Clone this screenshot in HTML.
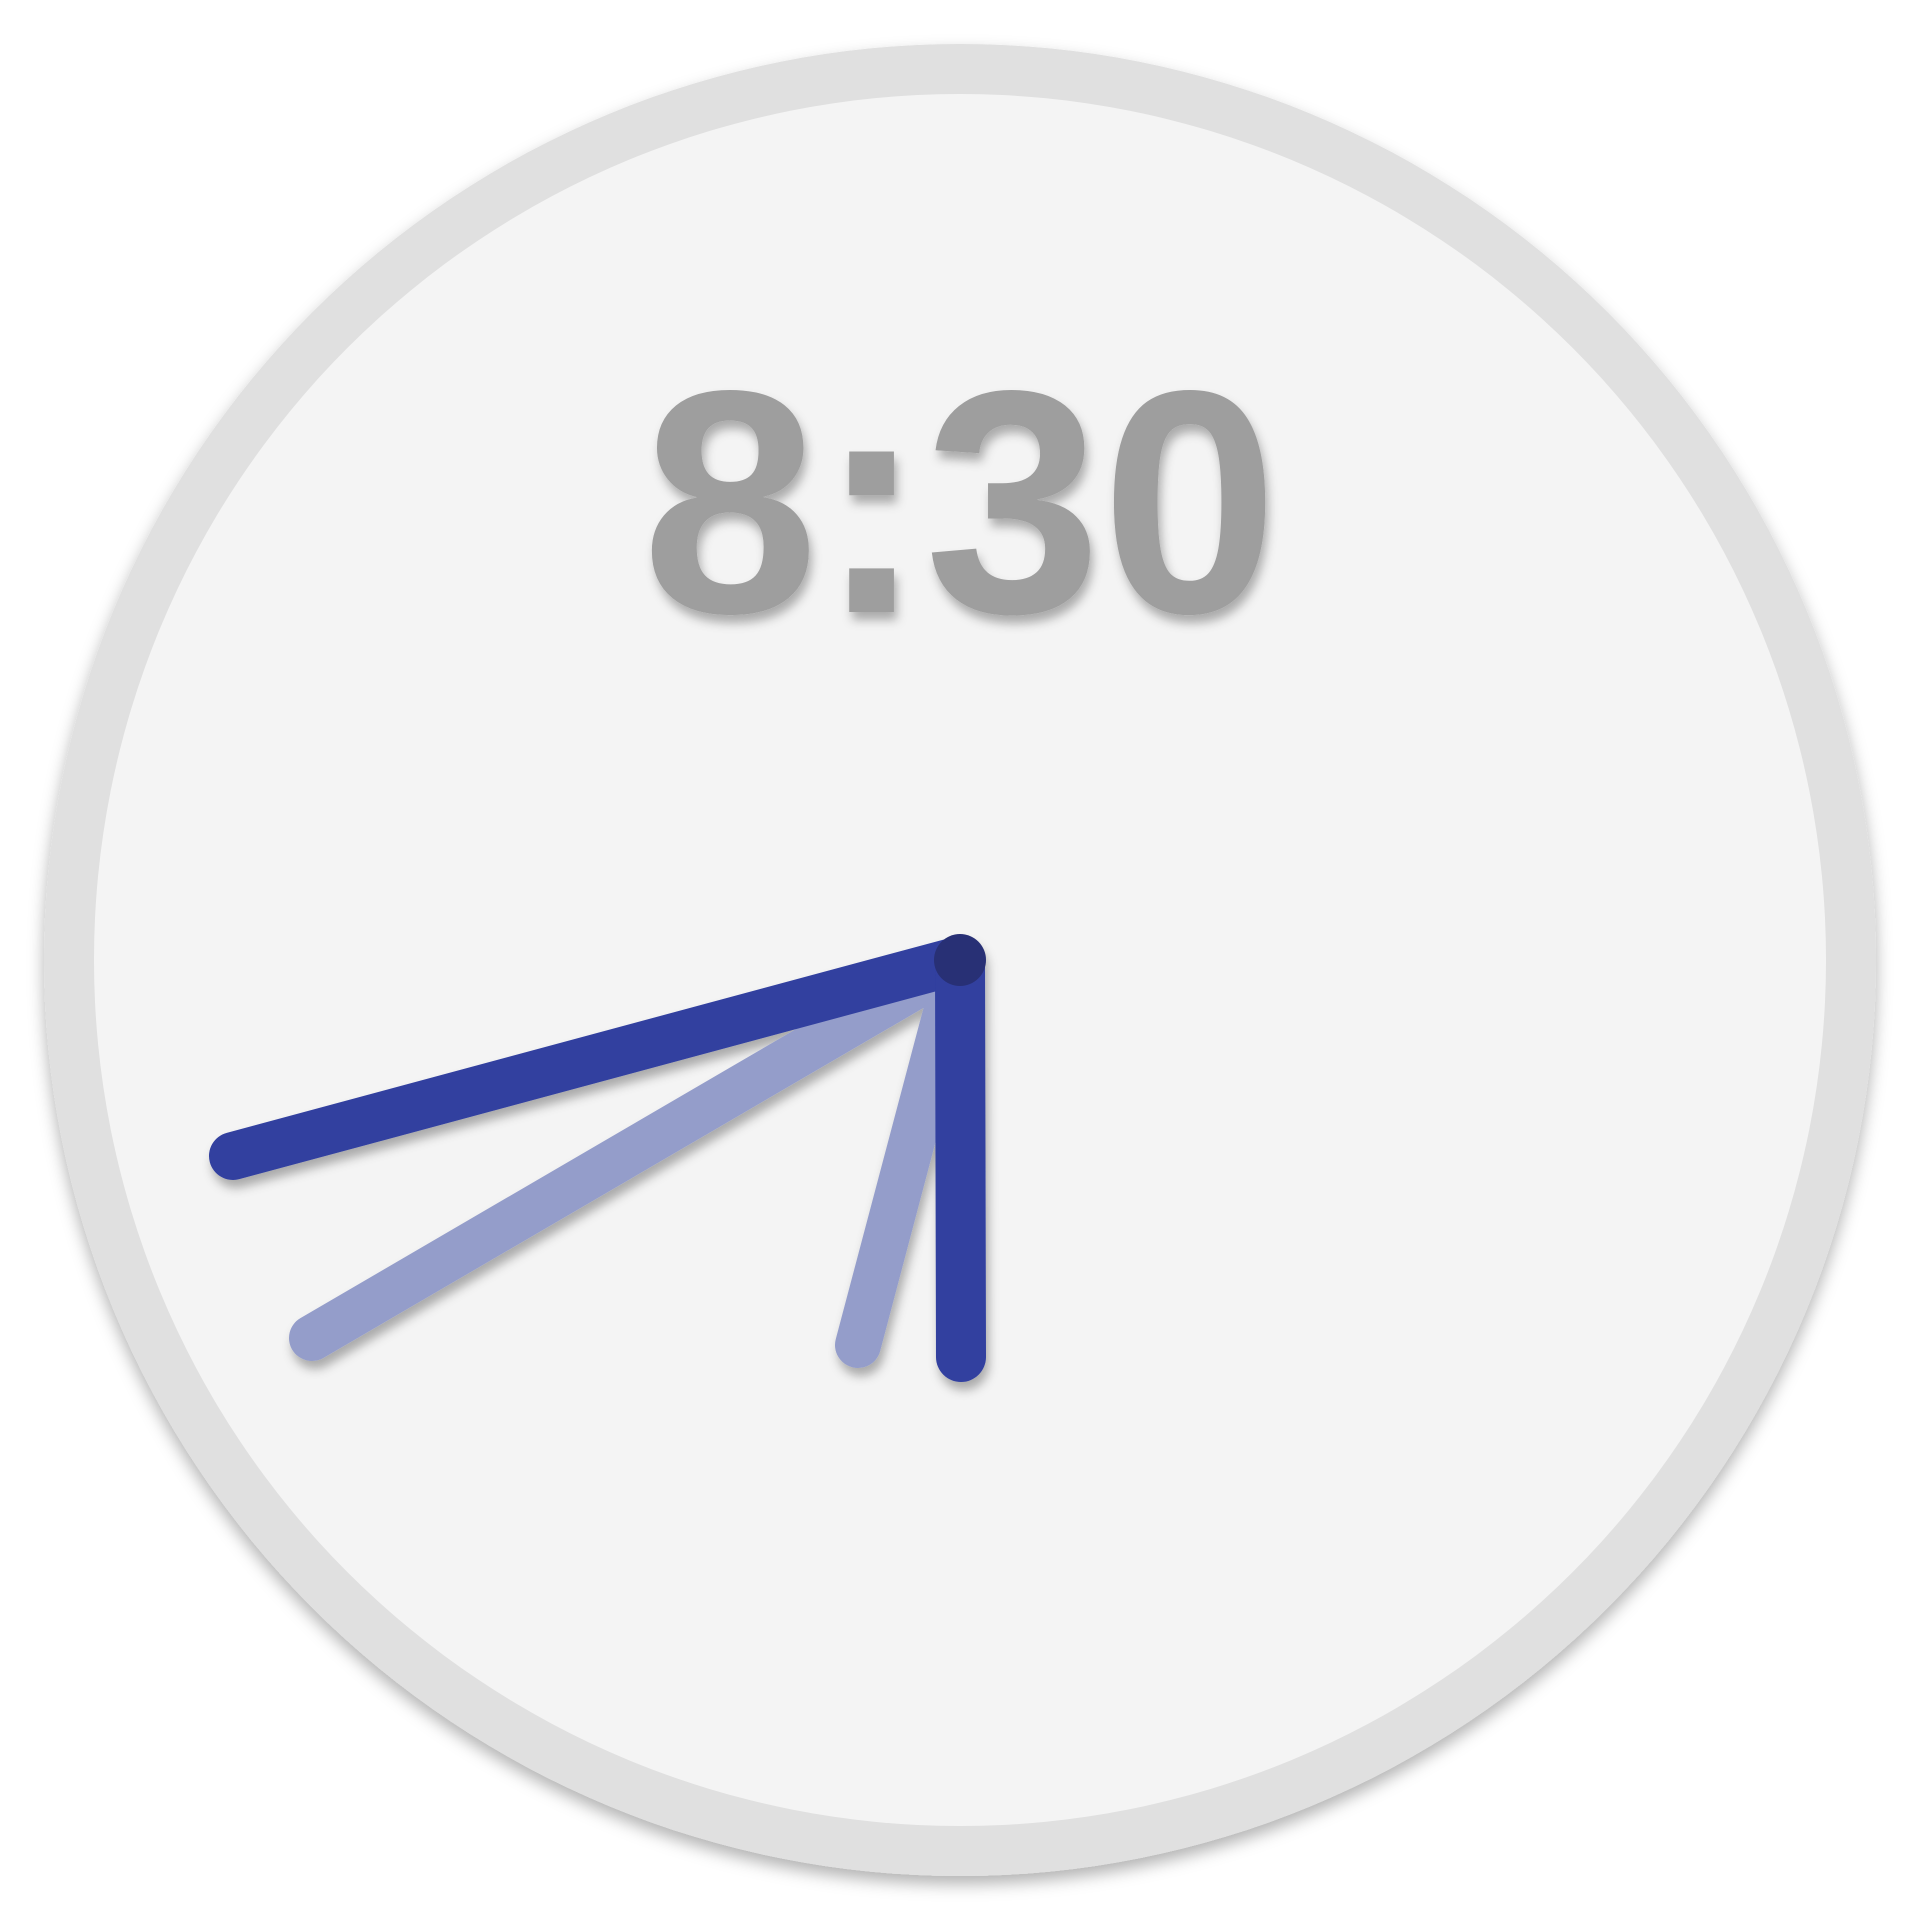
<!DOCTYPE html>
<html><head><meta charset="utf-8"><style>
html,body{margin:0;padding:0;background:#fff;width:1920px;height:1920px;overflow:hidden}
</style></head><body>
<svg width="1920" height="1920" viewBox="0 0 1920 1920" xmlns="http://www.w3.org/2000/svg">
<defs>
<filter id="sh" x="-20%" y="-20%" width="140%" height="140%"><feDropShadow dx="0" dy="8" stdDeviation="8" flood-color="#000" flood-opacity="0.3"/></filter>
<filter id="hs" x="-20%" y="-20%" width="140%" height="140%"><feDropShadow dx="3" dy="8" stdDeviation="5" flood-color="#000" flood-opacity="0.3"/></filter>
</defs>
<circle cx="960" cy="960" r="916" fill="#e0e0e0" filter="url(#sh)"/>
<circle cx="960" cy="960" r="866" fill="#f4f4f4"/>
<text x="960" y="612" text-anchor="middle" font-family="Liberation Sans, sans-serif" font-weight="bold" font-size="318" fill="#9e9e9e" filter="url(#hs)">8:30</text>
<g stroke-linecap="round" filter="url(#hs)">
<line x1="960" y1="960" x2="312" y2="1338" stroke="#949dca" stroke-width="46"/>
<line x1="960" y1="960" x2="858" y2="1345" stroke="#949dca" stroke-width="46"/>
<line x1="960" y1="960" x2="233" y2="1156" stroke="#303f9f" stroke-width="48"/>
<line x1="960" y1="960" x2="961" y2="1357" stroke="#303f9f" stroke-width="50"/>
</g>
<circle cx="960" cy="960" r="26" fill="#283075"/>
</svg>
</body></html>
